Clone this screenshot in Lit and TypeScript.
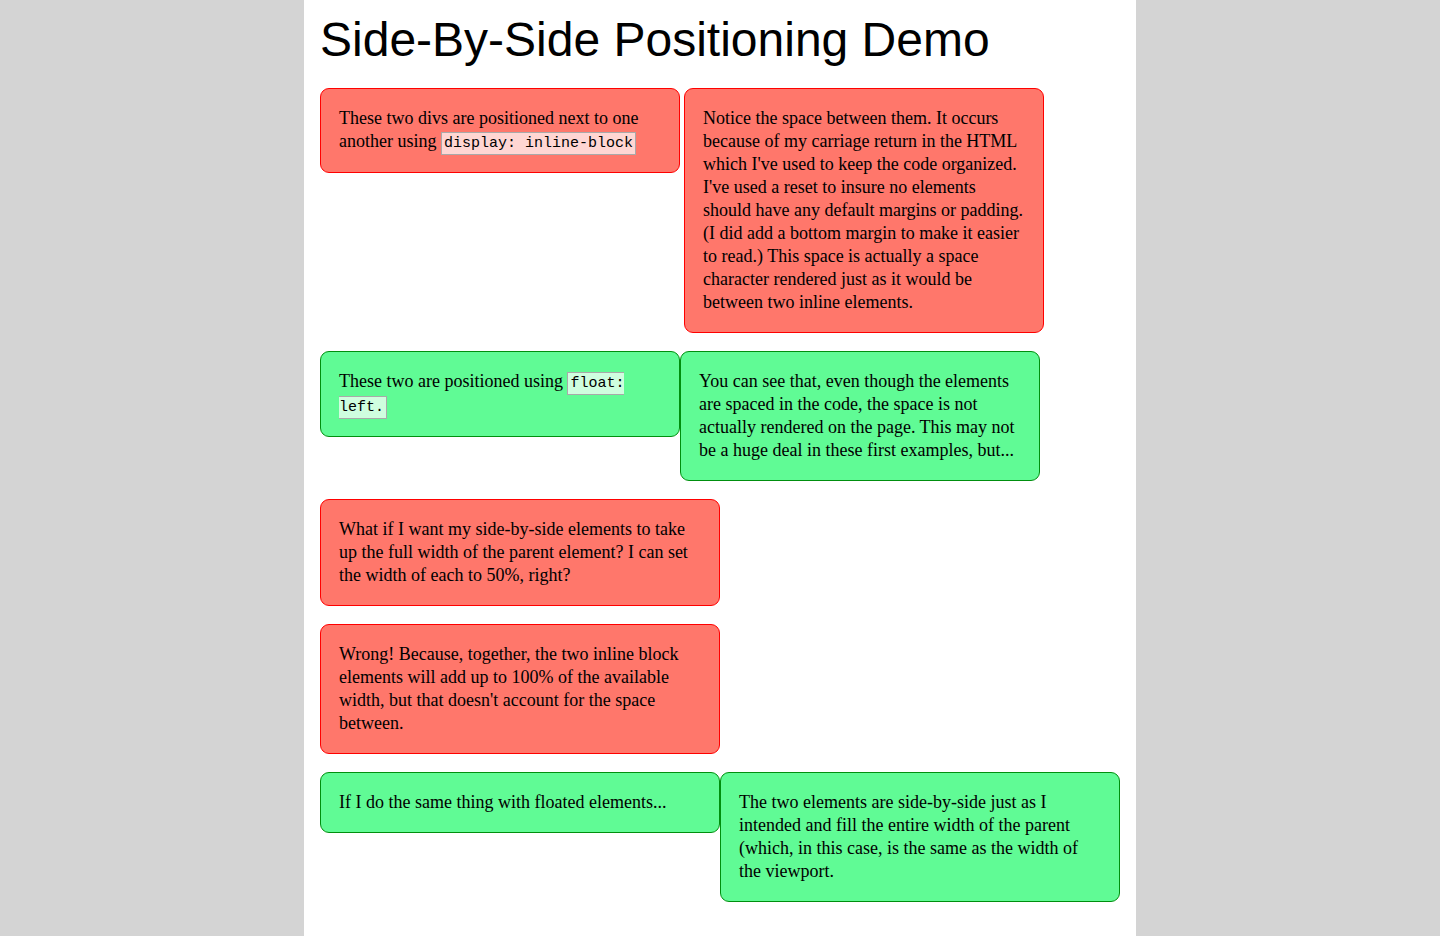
import { LitElement, html, css } from "lit";
import { customElement } from "lit/decorators.js";

@customElement("app-root")
export class AppRoot extends LitElement {
  static styles = css`
    :host {
      display: block;
      box-sizing: border-box;
      min-height: 100vh;
      background: #d4d4d4;
      color: #000;
      font-family: "Liberation Serif", "Times New Roman", serif;
      font-size: 18px;
      line-height: 23px;
    }
    * {
      box-sizing: border-box;
      margin: 0;
      padding: 0;
    }
    .page {
      max-width: 832px;
      min-height: 100vh;
      margin: 0 auto;
      padding: 8px 16px 16px;
      background: #fff;
    }
    h1 {
      margin-bottom: 16px;
      font: 400 48px/64px "Liberation Sans", Helvetica, Arial, sans-serif;
    }
    .row {
      display: flex;
      flex-wrap: wrap;
      align-items: flex-start;
      margin-bottom: 18px;
    }
    .spaced {
      column-gap: 4px;
      row-gap: 18px;
    }
    .box {
      width: 45%;
      padding: 18px;
      border: 1px solid #008f0e;
      border-radius: 9px;
      background: #60fb95;
    }
    .half {
      width: 50%;
    }
    .inline {
      border-color: #ff0000;
      background: #ff776b;
    }
    code {
      padding: 2px;
      border: 1px solid #a9a9a9;
      background: rgba(255, 255, 255, 0.7);
      font: 15px/21px "Liberation Mono", "Courier New", monospace;
    }
  `;

  render() {
    return html`
      <main class="page">
        <h1>Side-By-Side Positioning Demo</h1>
        <section class="row spaced">
          <div class="box inline">These two divs are positioned next to one another using <code>display: inline-block</code></div>
          <div class="box inline">Notice the space between them. It occurs because of my carriage return in the HTML which I've used to keep the code organized. I've used a reset to insure no elements should have any default margins or padding. (I did add a bottom margin to make it easier to read.) This space is actually a space character rendered just as it would be between two inline elements.</div>
        </section>
        <section class="row">
          <div class="box">These two are positioned using <code>float: left.</code></div>
          <div class="box">You can see that, even though the elements are spaced in the code, the space is not actually rendered on the page. This may not be a huge deal in these first examples, but...</div>
        </section>
        <section class="row spaced">
          <div class="box half inline">What if I want my side-by-side elements to take up the full width of the parent element? I can set the width of each to 50%, right?</div>
          <div class="box half inline">Wrong! Because, together, the two inline block elements will add up to 100% of the available width, but that doesn't account for the space between.</div>
        </section>
        <section class="row">
          <div class="box half">If I do the same thing with floated elements...</div>
          <div class="box half">The two elements are side-by-side just as I intended and fill the entire width of the parent (which, in this case, is the same as the width of the viewport.</div>
        </section>
      </main>
    `;
  }
}
